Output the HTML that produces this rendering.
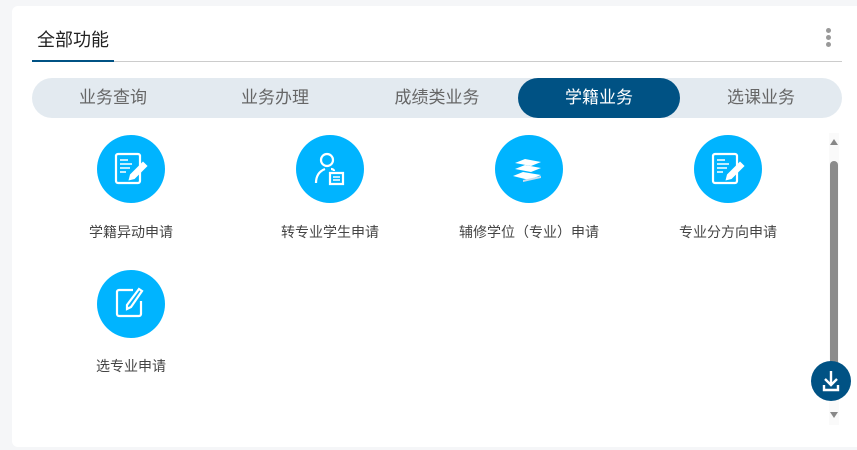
<!DOCTYPE html>
<html><head><meta charset="utf-8"><style>
*{margin:0;padding:0;box-sizing:border-box}
body{width:857px;height:450px;background:#f5f6f8;font-family:"Liberation Sans","Noto Sans CJK SC",sans-serif;position:relative;overflow:hidden}
.card{position:absolute;left:12px;top:6px;width:850px;height:441px;background:#fff;border-radius:6px}
.abs{position:absolute}
.title{left:37px;top:26px;font-size:18px;color:#222}
.line{left:32px;top:61px;width:810px;height:1px;background:#ccc}
.uline{left:32px;top:60px;width:82px;height:2px;background:#005284}
.dot{width:5px;height:5px;border-radius:50%;background:#999;left:826px}
.tabs{left:32px;top:78px;width:810px;height:40px;background:#e3eaf0;border-radius:20px}
.tab{top:78px;height:40px;line-height:39px;font-size:17px;color:#666;text-align:center;width:162px}
.act{background:#005284;color:#fff;border-radius:20px}
.c{width:68px;height:68px;border-radius:50%;background:#00b4ff}
.c svg{position:absolute;left:14px;top:14px}
.lab{font-size:14px;color:#444;text-align:center;width:200px}
</style></head><body>
<div class="card"></div>
<div class="abs title">全部功能</div>
<div class="abs line"></div><div class="abs uline"></div>
<div class="abs dot" style="top:28px"></div><div class="abs dot" style="top:35px"></div><div class="abs dot" style="top:42px"></div>
<div class="abs tabs"></div>
<div class="abs tab" style="left:32px">业务查询</div>
<div class="abs tab" style="left:194px">业务办理</div>
<div class="abs tab" style="left:356px">成绩类业务</div>
<div class="abs tab act" style="left:518px">学籍业务</div>
<div class="abs tab" style="left:680px">选课业务</div>

<div class="abs c" style="left:97px;top:135px"><svg width="40" height="40" viewBox="0 0 40 40" fill="none" stroke="#fff" stroke-width="2.2"><rect x="5" y="5" width="24" height="29" rx="2"/><path d="M9 11h8M9 15h12M9 19h10M9 23h6" stroke-width="1.6"/><path d="M32 14l3 3-12 12-4 1 1-4z" fill="#fff"/></svg></div>
<div class="abs lab" style="left:31px;top:222px">学籍异动申请</div>
<div class="abs c" style="left:296px;top:135px"><svg width="40" height="40" viewBox="0 0 40 40" fill="none" stroke="#fff" stroke-width="2.2"><circle cx="17" cy="11" r="6"/><path d="M6 34c0-8 4-12 9-14M21 20c2 0 3 1 3 2"/><path d="M20 24h13v11h-13z"/><path d="M23 28h7M23 31h7" stroke-width="1.4"/></svg></div>
<div class="abs lab" style="left:230px;top:222px">转专业学生申请</div>
<div class="abs c" style="left:495px;top:135px"><svg width="40" height="40" viewBox="0 0 40 40" fill="#fff"><path d="M6 14l10-4 16 3-10 4z"/><path d="M6 20l10-4 16 3-10 4z"/><path d="M4 27l10-4 18 3-12 5z"/><path d="M14 31l18-4v2l-18 4z" fill="#cde"/></svg></div>
<div class="abs lab" style="left:429px;top:222px">辅修学位（专业）申请</div>
<div class="abs c" style="left:694px;top:135px"><svg width="40" height="40" viewBox="0 0 40 40" fill="none" stroke="#fff" stroke-width="2.2"><rect x="5" y="5" width="24" height="29" rx="2"/><path d="M9 11h8M9 15h12M9 19h10M9 23h6" stroke-width="1.6"/><path d="M32 14l3 3-12 12-4 1 1-4z" fill="#fff"/></svg></div>
<div class="abs lab" style="left:628px;top:222px">专业分方向申请</div>
<div class="abs c" style="left:97px;top:270px"><svg width="40" height="40" viewBox="0 0 40 40" fill="none" stroke="#fff" stroke-width="2.2"><path d="M22 6H8a2 2 0 0 0-2 2v22a2 2 0 0 0 2 2h20a2 2 0 0 0 2-2V17"/><path d="M28 5l3 2-11 16-4 2 0-4z"/></svg></div>
<div class="abs lab" style="left:31px;top:356px">选专业申请</div>

<div class="abs" style="left:829px;top:133px;width:10px;height:292px;background:#fafafa"></div>
<div class="abs" style="left:830px;top:139px;width:0;height:0;border-left:4px solid transparent;border-right:4px solid transparent;border-bottom:6px solid #888"></div>
<div class="abs" style="left:830px;top:161px;width:8px;height:205px;background:#8c8c8c;border-radius:4px"></div>
<div class="abs" style="left:830px;top:412px;width:0;height:0;border-left:4px solid transparent;border-right:4px solid transparent;border-top:6px solid #888"></div>
<div class="abs" style="left:811px;top:361px;width:40px;height:40px;border-radius:50%;background:#005284"><svg width="40" height="40" viewBox="0 0 40 40" fill="none" stroke="#fff" stroke-width="2.4"><path d="M20 10v13M14 18l6 6 6-6"/><path d="M13 24v5h14v-5"/></svg></div>
</body></html>
